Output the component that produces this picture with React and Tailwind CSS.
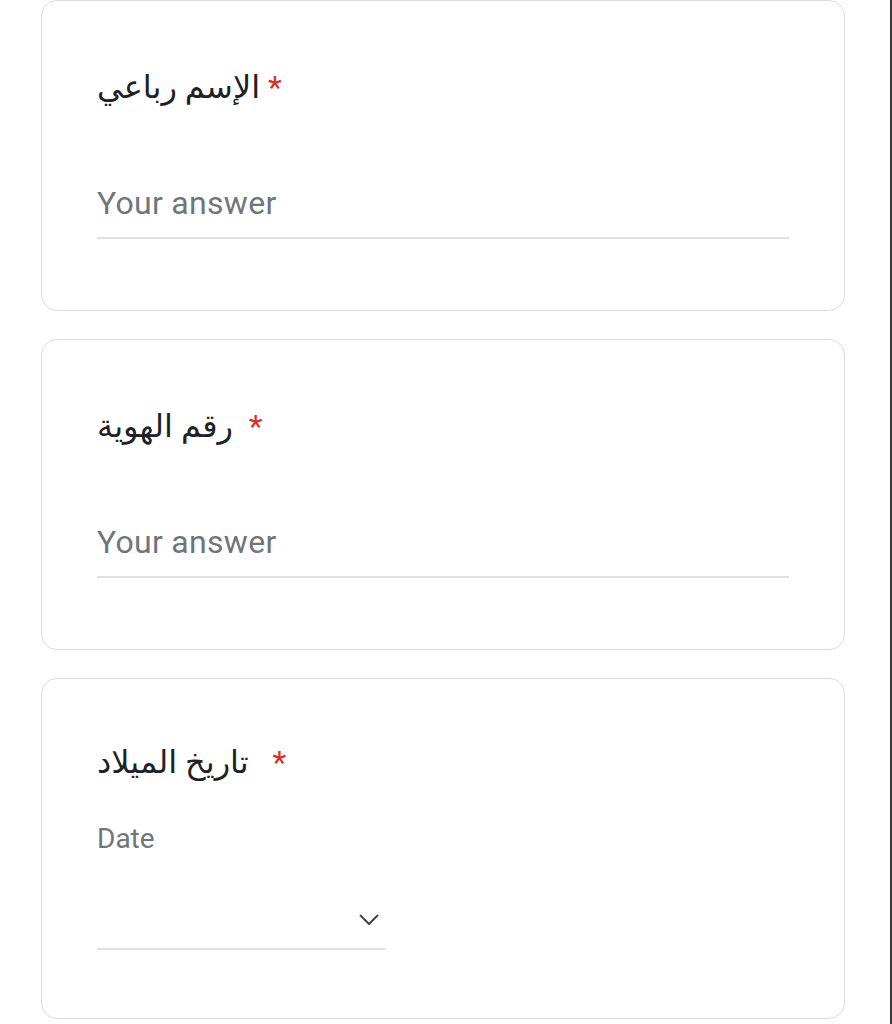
const questions = [
  { title: 'الإسم رباعي', gap: ' ', type: 'text' },
  { title: 'رقم الهوية', gap: '\u00a0\u00a0', type: 'text' },
  { title: 'تاريخ الميلاد', gap: '\u00a0\u00a0\u00a0', type: 'date' },
]

const Title = ({ q }) => (
  <div className="h-[40px] leading-[40px] text-[32px] text-[#202124] whitespace-nowrap" dir="ltr">
    <span>{q.title}</span>
    <span className="text-[#d93025]">{q.gap}*</span>
  </div>
)

const TextQuestion = ({ q }) => (
  <div className="h-[311px] rounded-[16px] border border-[#dadce0] bg-white px-[55px] pt-[66px]">
    <Title q={q} />
    <div className="mt-[76px] h-[40px] leading-[40px] text-[32px] tracking-[0.3px] text-[#70757a]">Your answer</div>
    <div className="mt-[14px] h-[2px] bg-[#e0e0e0]" />
  </div>
)

const DateQuestion = ({ q }) => (
  <div className="h-[341px] rounded-[16px] border border-[#dadce0] bg-white px-[55px] pt-[63px]">
    <Title q={q} />
    <div className="mt-[40px] h-[34px] leading-[34px] text-[28px] text-[#70757a]">Date</div>
    <div className="mt-[46px] w-[288px]">
      <div className="flex h-[36px] items-center justify-end pr-[6px]">
        <svg width="20" height="12" viewBox="0 0 20 12" fill="none">
          <path d="M1.5 1.5 L10 10 L18.5 1.5" stroke="#3c4043" strokeWidth="1.8" strokeLinecap="round" strokeLinejoin="round" />
        </svg>
      </div>
      <div className="mt-[10px] h-[2px] bg-[#e0e0e0]" />
    </div>
  </div>
)

export default function App() {
  return (
    <div
      className="flex h-[1024px] w-full overflow-hidden bg-white"
      style={{ fontFamily: 'Roboto, "DejaVu Sans", "Noto Sans", sans-serif' }}
    >
      <div className="flex flex-1 flex-col gap-[28px] pl-[41px] pr-[45px]">
        {questions.map((q, i) =>
          q.type === 'date' ? <DateQuestion key={i} q={q} /> : <TextQuestion key={i} q={q} />
        )}
      </div>
      <div className="w-[2px] bg-[#3a3a3a]" />
    </div>
  )
}
